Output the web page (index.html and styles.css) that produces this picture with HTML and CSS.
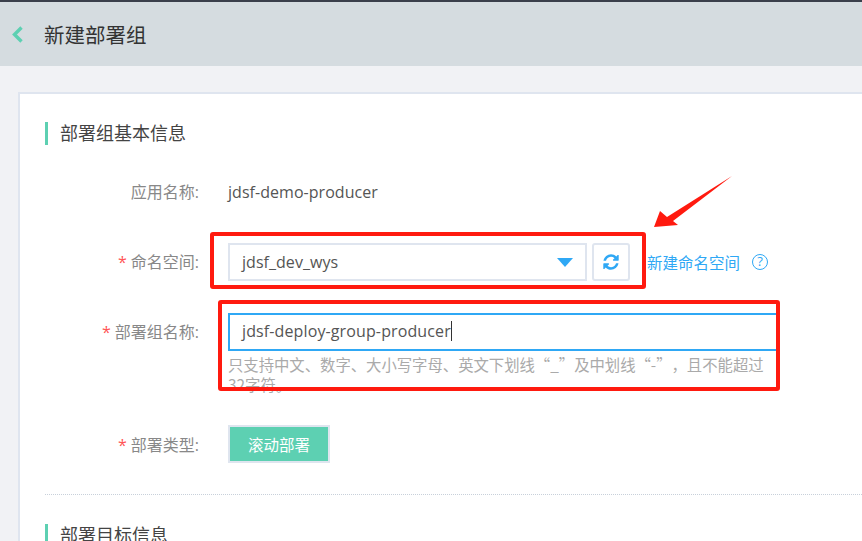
FILE: index.html
```html
<!DOCTYPE html>
<html lang="zh-CN">
<head>
    <meta charset="UTF-8">
    <meta name="viewport" content="width=device-width, initial-scale=1.0">
    <title>新建部署组</title>

    <link rel="stylesheet" href="styles.css">
</head>
<body>
  <div class="top-strip"></div>
  <header class="page-head">
    <svg class="back" width="11" height="17" viewBox="0 0 11 17"><path d="M9.5 1.5 2.5 8.5l7 7" fill="none" stroke="#5dd0b2" stroke-width="3.4"/></svg>
    <h1>新建部署组</h1>
  </header>

  <main class="card">
    <h2 class="section-title">部署组基本信息</h2>

    <div class="form-row">
      <label class="form-label">应用名称:</label>
      <span class="form-value">jdsf-demo-producer</span>
    </div>

    <div class="form-row">
      <label class="form-label"><span class="star">*</span>命名空间:</label>
      <div class="select">
        <span class="form-value">jdsf_dev_wys</span>
        <i class="caret"></i>
      </div>
      <button class="refresh">
        <svg width="18" height="18" viewBox="0 0 1792 1792"><path fill="#2fa8f5" d="M1639 1056q0 5-1 7-64 268-268 434.5t-478 166.5q-146 0-282.5-55t-243.5-157l-129 129q-19 19-45 19t-45-19-19-45v-448q0-26 19-45t45-19h448q26 0 45 19t19 45-19 45l-137 137q71 66 161 102t187 36q134 0 250-65t186-179q11-17 53-117 8-23 30-23h192q13 0 22.5 9.5t9.5 22.5zm25-800v448q0 26-19 45t-45 19h-448q-26 0-45-19t-19-45 19-45l138-138q-148-137-349-137-134 0-250 65t-186 179q-11 17-53 117-8 23-30 23h-199q-13 0-22.5-9.5t-9.5-22.5v-7q65-268 270-434.5t480-166.5q146 0 284 55.5t245 156.5l130-129q19-19 45-19t45 19 19 45z"/></svg>
      </button>
      <a class="link">新建命名空间</a>
      <span class="help">?</span>
    </div>

    <div class="form-row name-row">
      <label class="form-label"><span class="star">*</span>部署组名称:</label>
      <div class="field">
        <div class="input">jdsf-deploy-group-producer<i class="text-cursor"></i></div>
        <p class="hint">只支持中文、数字、大小写字母、英文下划线“_”及中划线“-”，且不能超过32字符。</p>
      </div>
    </div>

    <div class="form-row type-row">
      <label class="form-label"><span class="star">*</span>部署类型:</label>
      <button class="type-btn">滚动部署</button>
    </div>

    <div class="divider"></div>

    <h2 class="section-title">部署目标信息</h2>
  </main>

  <!-- screenshot annotations -->
  <div class="mark mark-ns"></div>
  <div class="mark mark-name"></div>
  <svg class="arrow" width="90" height="60" viewBox="0 0 90 60"><polygon points="4,57 10,41 17,47 82,6 23,51 28,55" fill="#ff1a0f"/></svg>
</body>
</html>
```

FILE: styles.css
```css
html, body {
    height: 100%;
    overflow: hidden;
}

body {
    margin: 0;
    background-color: #f1f2f5;
    font-family: "Open Sans", "Noto Sans CJK SC", sans-serif;
    font-size: 16px;
    color: #555;
    position: relative;
}

.top-strip {
    height: 2px;
    background-color: #3a3f4b;
}

.page-head {
    height: 64px;
    background-color: #d5dce0;
    display: flex;
    align-items: center;
    padding-left: 12px;
}

.page-head h1 {
    margin: 0 0 0 21px;
    font-size: 20.5px;
    font-weight: 400;
    color: #333;
}

.card {
    width: 900px;
    margin: 26px 0 0 18px;
    padding: 28px 0 0 25px;
    box-sizing: border-box;
    height: 600px;
    background-color: #fff;
    border: 2px solid #dfe5ef;
}

.section-title {
    margin: 0 0 28px;
    height: 23px;
    line-height: 23px;
    padding-left: 12px;
    border-left: 3px solid #5dd0b2;
    font-size: 18px;
    font-weight: 400;
    color: #444;
}

.form-row {
    display: flex;
    align-items: center;
    min-height: 38px;
    margin-bottom: 32px;
}

.form-label {
    width: 154px;
    margin: -2px 29px 0 0;
    text-align: right;
    color: #888;
    flex-shrink: 0;
}

.star {
    color: #f55;
    margin-right: 4px;
}

.form-value {
    margin-top: -1px;
    letter-spacing: 0.04px;
    color: #555;
}

.select {
    width: 359px;
    height: 38px;
    box-sizing: border-box;
    border: 2px solid #dfe5ef;
    padding: 0 12px;
    display: flex;
    align-items: center;
    justify-content: space-between;
}

.caret {
    width: 0;
    height: 0;
    border-left: 8px solid transparent;
    border-right: 8px solid transparent;
    border-top: 9px solid #2fa8f5;
}

.refresh {
    width: 38px;
    height: 38px;
    margin-left: 5px;
    padding: 0;
    background-color: #fff;
    border: 2px solid #dfe5ef;
    border-radius: 3px;
    display: flex;
    align-items: center;
    justify-content: center;
}

.link {
    margin-left: 17px;
    color: #2fa8f5;
    font-size: 15.5px;
}

.help {
    width: 16px;
    height: 16px;
    margin-left: 12px;
    box-sizing: border-box;
    border: 1.5px solid #2fa8f5;
    border-radius: 50%;
    color: #2fa8f5;
    font-size: 13px;
    line-height: 13px;
    text-align: center;
}

.name-row {
    align-items: flex-start;
    margin-bottom: 31px;
}

.name-row .form-label {
    margin-top: 0;
    line-height: 38px;
}

.field {
    width: 550px;
}

.input {
    height: 38px;
    box-sizing: border-box;
    border: 2px solid #2fa8f5;
    padding-left: 12px;
    line-height: 32px;
    letter-spacing: 0.12px;
    color: #555;
}

.text-cursor {
    display: inline-block;
    width: 1px;
    height: 20px;
    background-color: #333;
    vertical-align: -4px;
}

.hint {
    width: 540px;
    margin: 3px 0 0;
    line-height: 20px;
    font-family: "Noto Sans CJK SC", sans-serif;
    font-size: 15.35px;
    text-spacing-trim: space-all;
    color: #aaa;
}

.type-row {
    margin-bottom: 31px;
}

.type-row .form-label {
    margin-top: 0;
}

.type-btn {
    width: 102px;
    height: 38px;
    background-color: #5dd0b2;
    border: 2px solid #dfe5ef;
    color: #fff;
    font-family: inherit;
    font-size: 15.5px;
}

.divider {
    border-top: 1px dotted #c8d0da;
    margin-bottom: 29px;
}

/* red boxes drawn over the screenshot */
.mark {
    position: absolute;
    box-sizing: border-box;
    border: 4px solid #ff1a0f;
    border-radius: 3px;
}

.mark-ns {
    left: 210px;
    top: 232px;
    width: 436px;
    height: 57px;
}

.mark-name {
    left: 218px;
    top: 300px;
    width: 562px;
    height: 91px;
}

.arrow {
    position: absolute;
    left: 650px;
    top: 170px;
}
```
